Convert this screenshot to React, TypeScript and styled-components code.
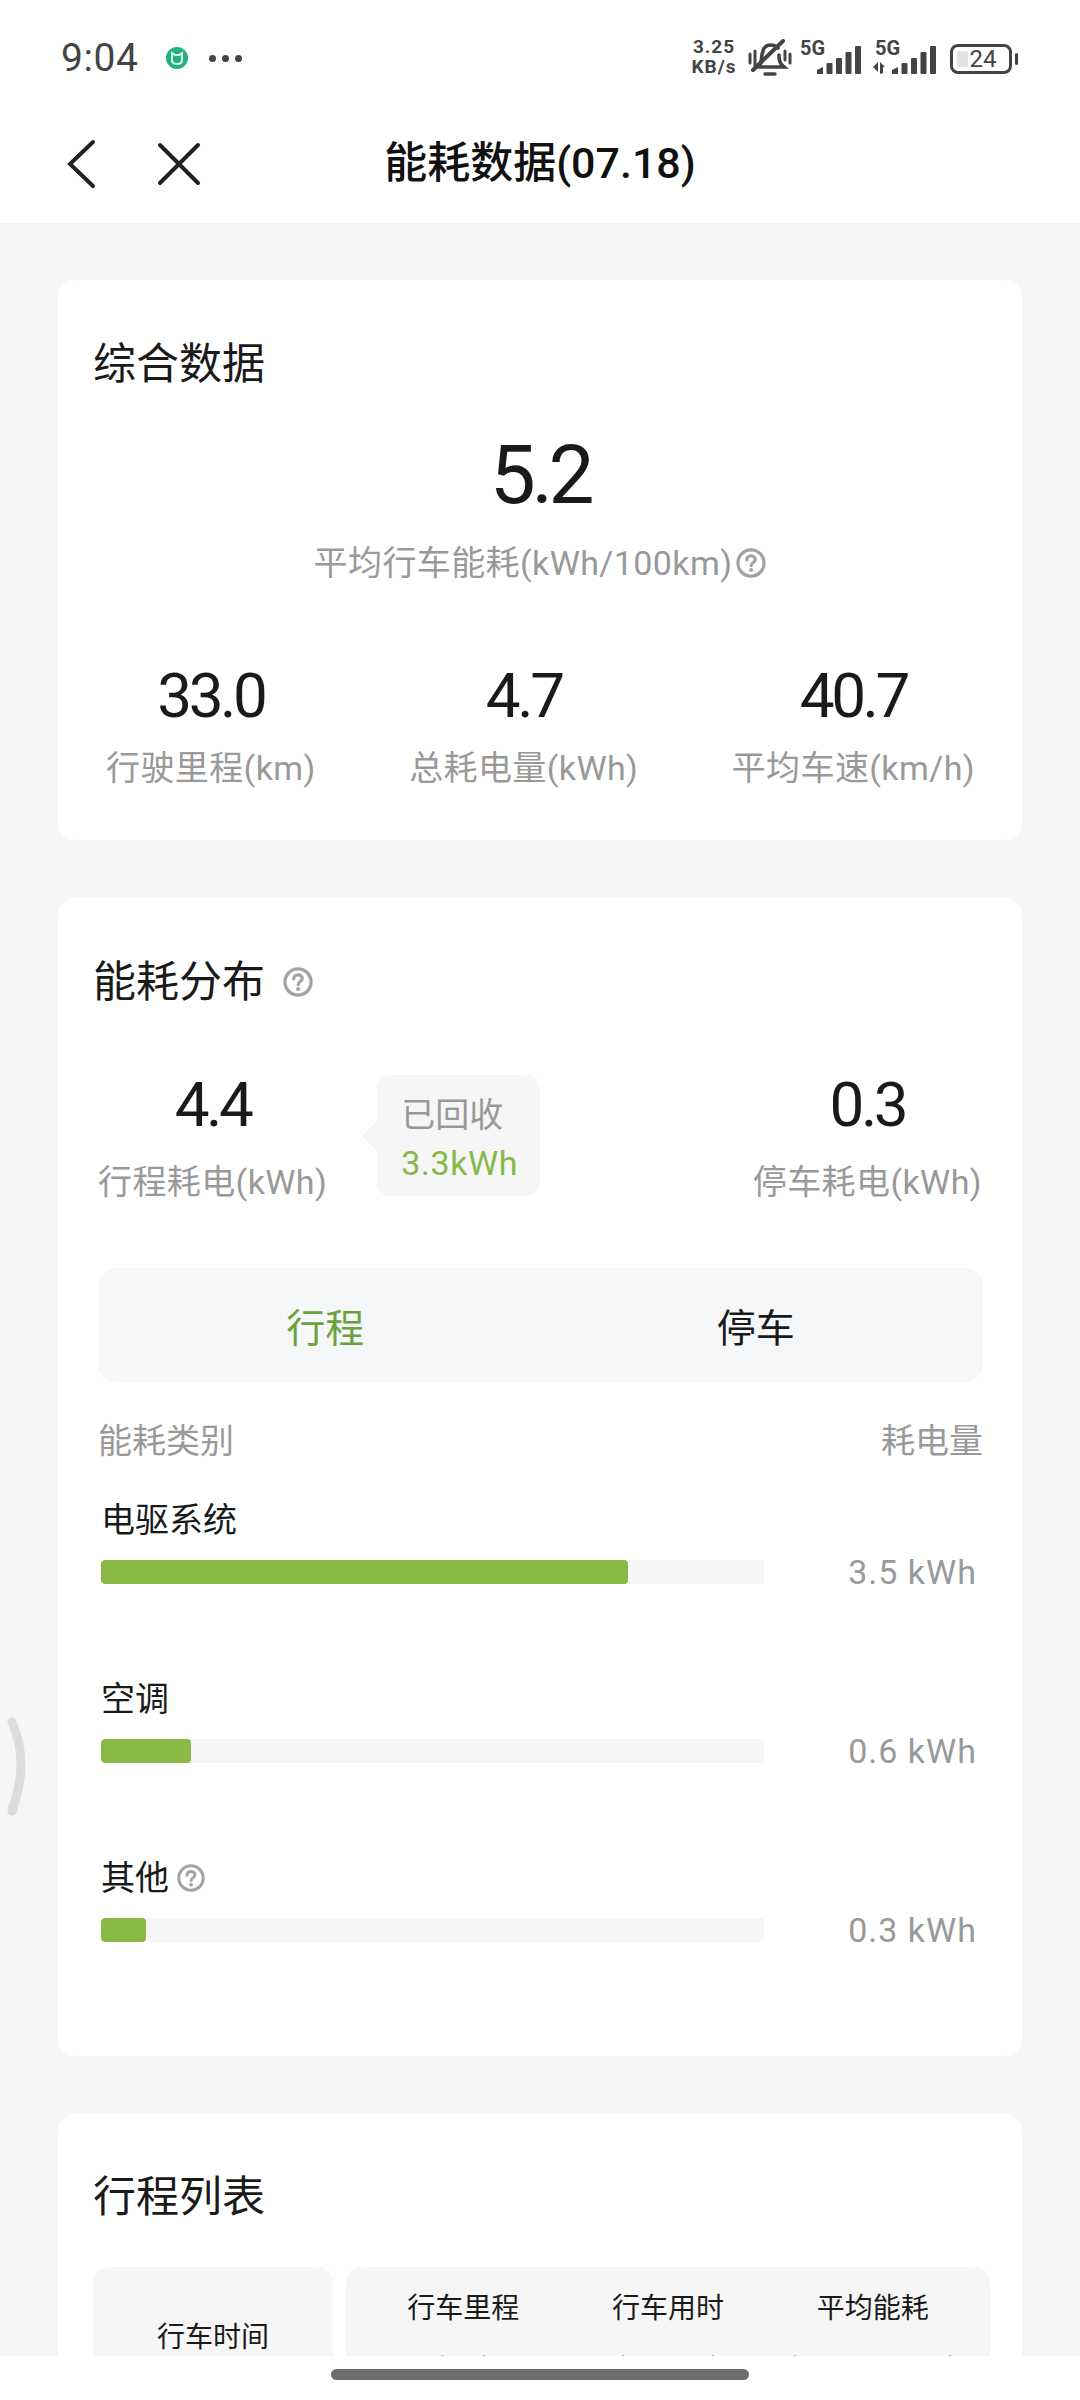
import React from 'react';
import styled, { createGlobalStyle } from 'styled-components';

const GlobalStyle = createGlobalStyle`
  html, body {
    margin: 0;
    padding: 0;
    background: #f6f6f6;
  }
  * {
    box-sizing: border-box;
  }
  body {
    font-family: Roboto, "Noto Sans CJK SC", sans-serif;
  }
`;

const Page = styled.div`
  position: relative;
  width: 1080px;
  height: 2400px;
  overflow: hidden;
  background: #f6f6f6;
`;

const TopArea = styled.div`
  background: #fff;
`;

const StatusBar = styled.div`
  height: 116px;
  padding: 0 62px 0 61px;
  display: flex;
  align-items: center;
  color: #444;
`;

const Clock = styled.span`
  font-size: 39px;
  letter-spacing: 0.6px;
  font-weight: 400;
  margin-right: 27px;
`;

const Dots = styled.div`
  display: flex;
  gap: 6px;
  margin-left: 21px;
`;

const Dot = styled.i`
  width: 7px;
  height: 7px;
  border-radius: 50%;
  background: #444;
`;

const StatusIcons = styled.div`
  margin-left: auto;
  display: flex;
  align-items: flex-end;
  height: 38px;
`;

const Speed = styled.div`
  font-size: 19px;
  font-weight: 700;
  line-height: 20px;
  letter-spacing: 1px;
  text-align: center;
  width: 48px;
  margin-right: 10px;
  color: #444;
`;

const SignalWrap = styled.div<{ $width: number; $gap: number }>`
  position: relative;
  width: ${(p) => p.$width}px;
  height: 33px;
  margin-left: ${(p) => p.$gap}px;
  margin-bottom: 3px;
`;

const FiveG = styled.span<{ $left: number }>`
  position: absolute;
  left: ${(p) => p.$left}px;
  top: -5px;
  font-size: 20px;
  line-height: 24px;
  font-weight: 700;
  color: #444;
`;

const Battery = styled.div`
  position: relative;
  width: 62px;
  height: 30px;
  margin: 0 6px 3px 14px;
  border: 3px solid #444;
  border-radius: 8px;
  display: flex;
  align-items: center;
  justify-content: center;
  font-size: 24px;
  color: #444;
  &::before {
    content: '';
    position: absolute;
    left: 4px;
    top: 4px;
    bottom: 4px;
    width: 11px;
    background: #e2e2e2;
    border-radius: 2px;
  }
  &::after {
    content: '';
    position: absolute;
    right: -9px;
    top: 6px;
    width: 3px;
    height: 12px;
    background: #444;
    border-radius: 2px;
  }
`;

const BatteryNumber = styled.span`
  position: relative;
  margin-left: 4px;
`;

const NavBar = styled.div`
  position: relative;
  height: 107px;
  padding-bottom: 21px;
  display: flex;
  align-items: center;
  justify-content: center;
`;

const NavIcons = styled.div`
  position: absolute;
  left: 66px;
  top: 23px;
  display: flex;
  gap: 59px;
  align-items: center;
`;

const NavTitle = styled.h1`
  margin: 0;
  font-size: 43px;
  font-weight: 500;
  color: #111;
`;

const Content = styled.div`
  padding: 57px 58px 0;
  display: flex;
  flex-direction: column;
  gap: 58px;
`;

const Card = styled.section<{ $height: number }>`
  height: ${(p) => p.$height}px;
  background: #fff;
  border-radius: 16px;
  padding: 0 35px;
  flex-shrink: 0;
`;

const CardTitle = styled.h2<{ $top: number }>`
  margin: 0;
  padding-top: ${(p) => p.$top}px;
  font-size: 43px;
  line-height: 56px;
  font-weight: 400;
  color: #1a1a1a;
  display: flex;
  align-items: center;
  gap: 18px;
`;

const Number = styled.div<{ $size: number }>`
  font-size: ${(p) => p.$size}px;
  line-height: 1;
  color: #1a1a1a;
  font-weight: 400;
  letter-spacing: -0.055em;
`;

const Muted = styled.div`
  font-size: 34px;
  line-height: 46px;
  letter-spacing: 0.4px;
  color: #999;
  white-space: nowrap;
  display: flex;
  align-items: center;
  gap: 4px;
`;

const Headline = styled.div`
  margin-top: 42px;
  display: flex;
  flex-direction: column;
  align-items: center;
  gap: 24px;
`;

const StatsRow = styled.div`
  margin-top: 79px;
  padding: 0 12px 0 13px;
  display: flex;
  justify-content: space-between;
`;

const Stat = styled.div<{ $gap: number }>`
  display: flex;
  flex-direction: column;
  align-items: center;
  gap: ${(p) => p.$gap}px;
`;

const SplitRow = styled.div`
  margin-top: 64px;
  padding: 0 5px;
  display: flex;
  align-items: flex-start;
  justify-content: space-between;
`;

const SplitLeft = styled.div`
  display: flex;
  align-items: flex-start;
  gap: 50px;
`;

const Callout = styled.div`
  position: relative;
  width: 163px;
  height: 121px;
  margin-top: 1px;
  background: #f6f6f6;
  border-radius: 14px;
  padding: 16px 24px;
  font-size: 34px;
  line-height: 48px;
  color: #999;
  &::before {
    content: '';
    position: absolute;
    left: -11px;
    top: 50%;
    margin-top: -11px;
    width: 22px;
    height: 22px;
    background: #f6f6f6;
    transform: rotate(45deg);
    clip-path: polygon(0 0, 0 100%, 100% 100%);
  }
`;

const CalloutValue = styled.div`
  color: #86b84a;
  letter-spacing: 0.6px;
`;

const Tabs = styled.div`
  margin: 63px 4px 0 5px;
  height: 114px;
  padding: 0 12px;
  background: #f6f7f8;
  border-radius: 18px;
  display: grid;
  grid-template-columns: 1fr 1fr;
`;

const Tab = styled.div<{ $active?: boolean }>`
  display: flex;
  align-items: center;
  justify-content: center;
  font-size: 39px;
  color: ${(p) => (p.$active ? '#6aa33c' : '#1a1a1a')};
`;

const ListHead = styled.div`
  margin: 36px 4px 0 5px;
  display: flex;
  justify-content: space-between;
  font-size: 34px;
  line-height: 46px;
  color: #999;
`;

const EnergyList = styled.div`
  margin-top: 33px;
  padding: 0 10px 0 8px;
  display: flex;
  flex-direction: column;
  gap: 69px;
`;

const EnergyRow = styled.div`
  height: 110px;
  display: grid;
  grid-template-columns: 663px 1fr;
  grid-template-rows: 46px 1fr;
  row-gap: 17px;
`;

const EnergyName = styled.div`
  grid-column: 1 / 3;
  font-size: 34px;
  line-height: 46px;
  color: #1a1a1a;
  display: flex;
  align-items: center;
  gap: 8px;
`;

const Track = styled.div`
  height: 24px;
  background: #f6f6f6;
  border-radius: 4px;
  overflow: hidden;
`;

const Fill = styled.div`
  height: 100%;
  background: #8ab945;
  border-radius: 4px;
`;

const EnergyValue = styled.div`
  font-size: 34px;
  line-height: 24px;
  letter-spacing: 1px;
  color: #999;
  text-align: right;
`;

const TripTable = styled.div`
  margin: 42px -3px 0 0;
  display: grid;
  grid-template-columns: 240px 1fr;
  gap: 13px;
`;

const TripCell = styled.div`
  height: 180px;
  background: #f6f6f6;
  border-radius: 16px;
`;

const TimeCell = styled(TripCell)`
  padding-top: 51px;
  text-align: center;
  font-size: 28px;
  line-height: 40px;
  color: #1a1a1a;
`;

const ColumnsCell = styled(TripCell)`
  padding: 22px 15px 0;
  display: grid;
  grid-template-columns: repeat(3, 1fr);
`;

const TripColumn = styled.div`
  text-align: center;
  font-size: 28px;
  line-height: 40px;
  color: #1a1a1a;
  white-space: nowrap;
`;

const TripUnit = styled.div`
  margin-top: 19px;
  color: #999;
`;

const BottomBar = styled.div`
  position: absolute;
  left: 0;
  right: 0;
  bottom: 0;
  height: 44px;
  background: #fff;
  display: flex;
  justify-content: center;
  padding-top: 13px;
`;

const HomeHandle = styled.div`
  width: 418px;
  height: 11px;
  border-radius: 6px;
  background: #6d6d6d;
`;

const SideHandle = styled.svg`
  position: absolute;
  left: 4px;
  top: 1716px;
`;

const BarsIcon = styled.svg`
  position: absolute;
  left: 0;
  bottom: 0;
`;

const HelpIcon = ({ size }: { size: number }) => (
  <svg width={size} height={size} viewBox="0 0 28 28" fill="none">
    <circle cx="14" cy="14" r="12.2" stroke="#a3a3a3" strokeWidth="3" />
    <path
      d="M10 11.2c0-2.3 1.8-3.8 4-3.8s4 1.4 4 3.4c0 2.8-3.8 2.8-3.8 5.6"
      stroke="#a3a3a3"
      strokeWidth="3"
      strokeLinecap="round"
    />
    <circle cx="14.1" cy="20.6" r="1.9" fill="#a3a3a3" />
  </svg>
);

const Bars = ({ offset, arrows, width }: { offset: number; arrows?: boolean; width: number }) => (
  <BarsIcon width={width} height="28" viewBox={`0 0 ${width} 28`} fill="#444">
    {arrows && <path d="M0 21l5-5v10zM7 16l5 5-2 0v6l-3 1z" />}
    <path d={`M${offset} 24l6-3v7h-6z`} />
    <rect x={offset + 9.5} y="17" width="6" height="11" rx="1" />
    <rect x={offset + 19} y="12" width="6" height="16" rx="1" />
    <rect x={offset + 28.5} y="6" width="6" height="22" rx="1" />
    <rect x={offset + 38} y="0" width="6" height="28" rx="1" />
  </BarsIcon>
);

const energyRows = [
  { name: '电驱系统', value: '3.5 kWh', width: 527 },
  { name: '空调', value: '0.6 kWh', width: 90 },
  { name: '其他', value: '0.3 kWh', width: 45, help: true },
];

const stats = [
  { value: '33.0', label: '行驶里程(km)' },
  { value: '4.7', label: '总耗电量(kWh)' },
  { value: '40.7', label: '平均车速(km/h)' },
];

const App: React.FC = () => {
  return (
    <Page>
      <GlobalStyle />
      <TopArea>
        <StatusBar>
          <Clock>9:04</Clock>
          <svg width="22" height="22" viewBox="0 0 22 22">
            <circle cx="11" cy="11" r="11" fill="#20b27f" />
            <path d="M6 6l3 2h4l3-2v7c0 3-2 4-5 4s-5-1-5-4z" fill="none" stroke="#dff5ea" strokeWidth="2" />
          </svg>
          <Dots>
            <Dot />
            <Dot />
            <Dot />
          </Dots>
          <StatusIcons>
            <Speed>
              3.25
              <br />
              KB/s
            </Speed>
            <svg width="44" height="38" viewBox="0 0 44 38" fill="none" stroke="#444" strokeWidth="3.6">
              <path d="M12 26c2-4 1-9 3-14 1-4 4-6 8-6 3 0 5 1 7 3M31 16c0 4 0 8 5 12H9" strokeLinecap="round" />
              <path d="M5 31L35 2" strokeWidth="4" strokeLinecap="round" />
              <path d="M2 15v9M7 12v15M37 12v9M42 15v9" strokeWidth="3" strokeLinecap="round" />
              <path d="M17 35h10" strokeWidth="3.4" strokeLinecap="round" />
            </svg>
            <SignalWrap $width={61} $gap={8}>
              <FiveG $left={0}>5G</FiveG>
              <Bars offset={17} width={61} />
            </SignalWrap>
            <SignalWrap $width={63} $gap={12}>
              <FiveG $left={2}>5G</FiveG>
              <Bars offset={19} width={63} arrows />
            </SignalWrap>
            <Battery>
              <BatteryNumber>24</BatteryNumber>
            </Battery>
          </StatusIcons>
        </StatusBar>
        <NavBar>
          <NavIcons>
            <svg width="32" height="50" viewBox="0 0 32 50" fill="none" stroke="#222" strokeWidth="4" strokeLinecap="round">
              <path d="M27 3L4 25l23 22" />
            </svg>
            <svg width="44" height="44" viewBox="0 0 44 44" fill="none" stroke="#222" strokeWidth="4" strokeLinecap="round">
              <path d="M3 3l38 38M41 3L3 41" />
            </svg>
          </NavIcons>
          <NavTitle>能耗数据(07.18)</NavTitle>
        </NavBar>
      </TopArea>

      <Content>
        <Card $height={560}>
          <CardTitle $top={56}>综合数据</CardTitle>
          <Headline>
            <Number $size={82}>5.2</Number>
            <Muted>
              平均行车能耗(kWh/100km)
              <HelpIcon size={30} />
            </Muted>
          </Headline>
          <StatsRow>
            {stats.map((s) => (
              <Stat key={s.label} $gap={18}>
                <Number $size={62}>{s.value}</Number>
                <Muted>{s.label}</Muted>
              </Stat>
            ))}
          </StatsRow>
        </Card>

        <Card $height={1158}>
          <CardTitle $top={56}>
            能耗分布
            <HelpIcon size={30} />
          </CardTitle>
          <SplitRow>
            <SplitLeft>
              <Stat $gap={23}>
                <Number $size={62}>4.4</Number>
                <Muted>行程耗电(kWh)</Muted>
              </Stat>
              <Callout>
                已回收
                <CalloutValue>3.3kWh</CalloutValue>
              </Callout>
            </SplitLeft>
            <Stat $gap={23}>
              <Number $size={62}>0.3</Number>
              <Muted>停车耗电(kWh)</Muted>
            </Stat>
          </SplitRow>
          <Tabs>
            <Tab $active>行程</Tab>
            <Tab>停车</Tab>
          </Tabs>
          <ListHead>
            <span>能耗类别</span>
            <span>耗电量</span>
          </ListHead>
          <EnergyList>
            {energyRows.map((row) => (
              <EnergyRow key={row.name}>
                <EnergyName>
                  {row.name}
                  {row.help && <HelpIcon size={28} />}
                </EnergyName>
                <Track>
                  <Fill style={{ width: row.width }} />
                </Track>
                <EnergyValue>{row.value}</EnergyValue>
              </EnergyRow>
            ))}
          </EnergyList>
        </Card>

        <Card $height={400}>
          <CardTitle $top={55}>行程列表</CardTitle>
          <TripTable>
            <TimeCell>行车时间</TimeCell>
            <ColumnsCell>
              <TripColumn>
                行车里程
                <TripUnit>(km)</TripUnit>
              </TripColumn>
              <TripColumn>
                行车用时
                <TripUnit>(hh:mm)</TripUnit>
              </TripColumn>
              <TripColumn>
                平均能耗
                <TripUnit>(kWh/100km)</TripUnit>
              </TripColumn>
            </ColumnsCell>
          </TripTable>
        </Card>
      </Content>

      <SideHandle width="22" height="102" viewBox="0 0 22 102" fill="none">
        <path d="M8 6c6 14 9 26 9 43S13 80 8 95" stroke="#dcdcdc" strokeWidth="9" strokeLinecap="round" />
      </SideHandle>
      <BottomBar>
        <HomeHandle />
      </BottomBar>
    </Page>
  );
};

export default App;
